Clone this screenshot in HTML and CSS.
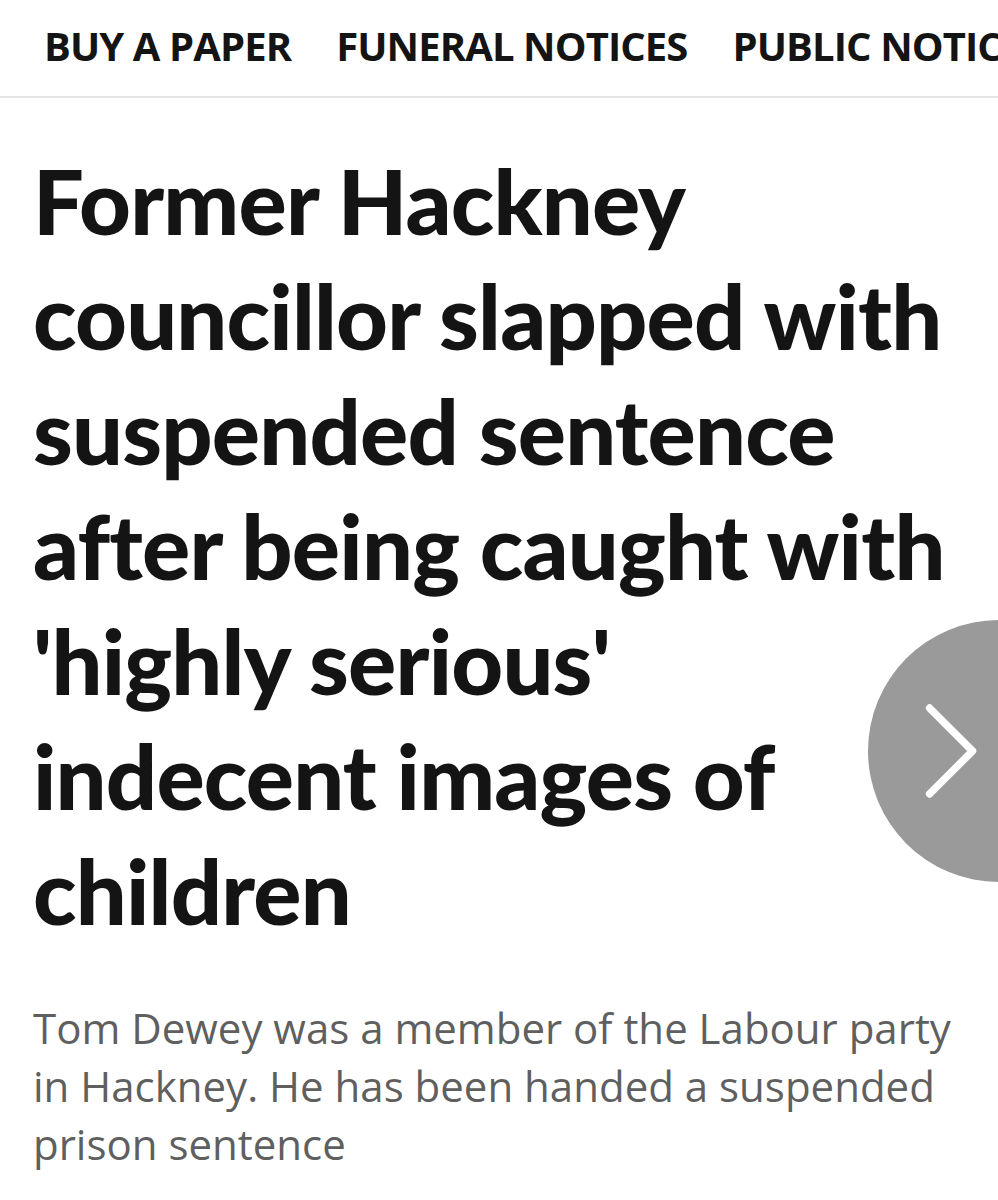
FILE: index.html
```html
<!DOCTYPE html>
<html lang="en">
<head>
<meta charset="utf-8">
<link rel="stylesheet" href="styles.css">
</head>
<body>
<nav class="nav">
  <a class="nav-item">BUY A PAPER</a>
  <a class="nav-item">FUNERAL NOTICES</a>
  <a class="nav-item">PUBLIC NOTICES</a>
</nav>
<main class="article">
  <h1 class="headline">Former Hackney councillor slapped with suspended sentence after being caught with 'highly serious' indecent images of children</h1>
  <p class="standfirst">Tom Dewey was a member of the Labour party in Hackney. He has been handed a suspended prison sentence</p>
</main>
<button class="next" aria-label="Next">
  <svg viewBox="0 0 60 104" width="60" height="104"><path d="M6 6 L52 52 L6 98" fill="none" stroke="#fff" stroke-width="8" stroke-linecap="round" stroke-linejoin="round"/></svg>
</button>
</body>
</html>
```
FILE: styles.css
```css
html, body { margin: 0; padding: 0; background: #fff; }
body { width: 998px; height: 1200px; overflow: hidden; position: relative; }
.nav {
  display: flex;
  gap: 45px;
  padding: 20px 0 0 44px;
  height: 76px;
  border-bottom: 2px solid #e6e6e6;
  white-space: nowrap;
  overflow: hidden;
}
.nav-item {
  font-family: "Open Sans", sans-serif;
  font-weight: 700;
  font-stretch: 88%;
  font-size: 40px;
  line-height: 52px;
  letter-spacing: -0.9px;
  color: #141414;
}
.article { padding: 0 46px 0 33px; }
.headline {
  margin: 45px 0 0;
  font-family: "Lato", sans-serif;
  font-weight: 900;
  font-size: 90px;
  line-height: 115px;
  letter-spacing: -0.8px;
  color: #141414;
}
.standfirst {
  margin: 51px 0 0;
  font-family: "Open Sans", sans-serif;
  font-weight: 400;
  font-size: 42px;
  line-height: 58px;
  color: #5f5f5f;
}
.next {
  position: absolute;
  left: 868px;
  top: 620px;
  width: 262px;
  height: 262px;
  border-radius: 50%;
  background: #9a9a9a;
  border: 0;
  padding: 0 0 0 56px;
  display: flex;
  align-items: center;
}
.next svg { width: 56px; height: 104px; }
```
